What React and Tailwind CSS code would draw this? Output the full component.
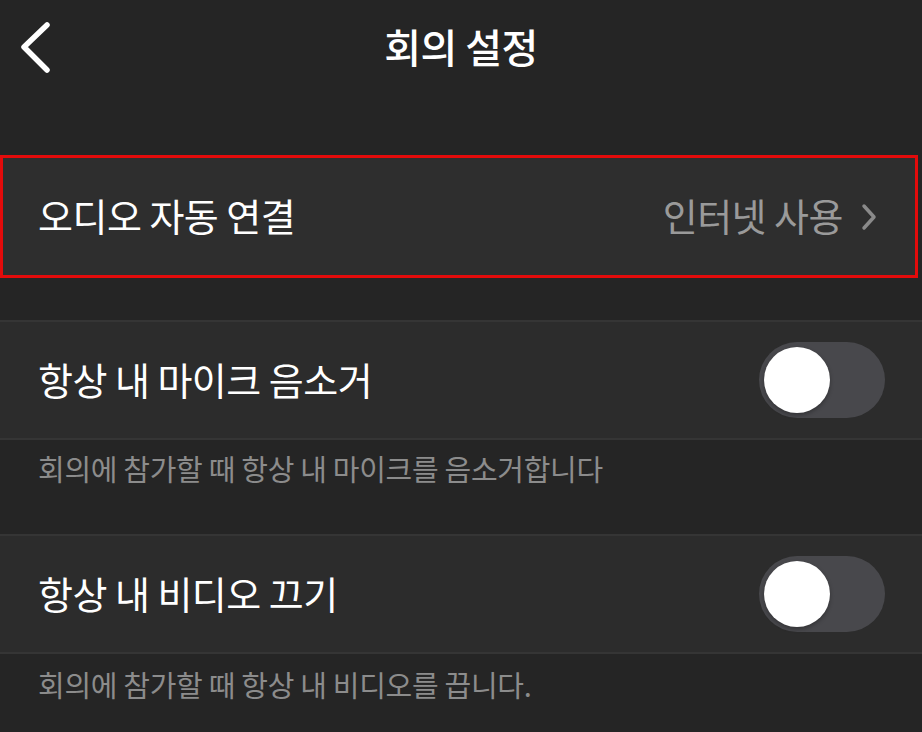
import React from "react";

const font = { fontFamily: '"Noto Sans CJK KR", "Noto Sans", sans-serif' };

function Toggle() {
  return (
    <div className="w-[126px] h-[76px] rounded-full bg-[#48484c] flex items-center pl-[5px]">
      <div className="w-[66px] h-[66px] rounded-full bg-white shadow-[0_2px_4px_rgba(0,0,0,0.3)]" />
    </div>
  );
}

export default function App() {
  return (
    <div className="w-[922px] h-[732px] bg-[#252525] text-white overflow-hidden" style={font}>
      <div className="relative h-[96px] flex items-center justify-center">
        <svg className="absolute left-[18px] top-[20px]" width="40" height="56" viewBox="0 0 40 56">
          <polyline points="29,5 6,27 29,50" fill="none" stroke="white" strokeWidth="5.5" strokeLinecap="round" strokeLinejoin="round" />
        </svg>
        <div className="text-[40px] leading-none font-medium -mt-[4px] tracking-[-0.5px]">회의 설정</div>
      </div>
      <div className="h-[59px]" />
      <div className="w-[918px] h-[123px] border-[3px] border-[#e30b0b] bg-[#2e2e2e] flex items-center justify-between pl-[35px] pr-[38px]">
        <div className="text-[38px] leading-none tracking-[-0.5px] -mt-[4px]">오디오 자동 연결</div>
        <div className="flex items-center gap-[18px] text-[#9a9a9a] text-[38px] leading-none tracking-[-0.5px] -mt-[4px]">
          <span>인터넷 사용</span>
          <svg width="16" height="28" viewBox="0 0 16 28" className="mt-[4px]">
            <polyline points="3,3 13,14 3,25" fill="none" stroke="#8a8a8a" strokeWidth="3.5" strokeLinecap="round" strokeLinejoin="round" />
          </svg>
        </div>
      </div>
      <div className="h-[42px]" />
      <div className="h-[120px] border-t-2 border-b-2 border-[#353535] bg-[#2c2c2c] flex items-center justify-between pl-[38px] pr-[37px]">
        <div className="text-[38px] leading-none tracking-[-0.5px] -mt-[2px]">항상 내 마이크 음소거</div>
        <Toggle />
      </div>
      <div className="h-[94px] pl-[38px] pt-[14px] text-[29px] leading-none text-[#8c8c8c] tracking-[-0.3px]">
        회의에 참가할 때 항상 내 마이크를 음소거합니다
      </div>
      <div className="h-[120px] border-t-2 border-b-2 border-[#353535] bg-[#2c2c2c] flex items-center justify-between pl-[38px] pr-[37px]">
        <div className="text-[38px] leading-none tracking-[-0.5px] -mt-[2px]">항상 내 비디오 끄기</div>
        <Toggle />
      </div>
      <div className="pl-[38px] pt-[16px] text-[29px] leading-none text-[#8c8c8c] tracking-[-0.3px]">
        회의에 참가할 때 항상 내 비디오를 끕니다.
      </div>
    </div>
  );
}
